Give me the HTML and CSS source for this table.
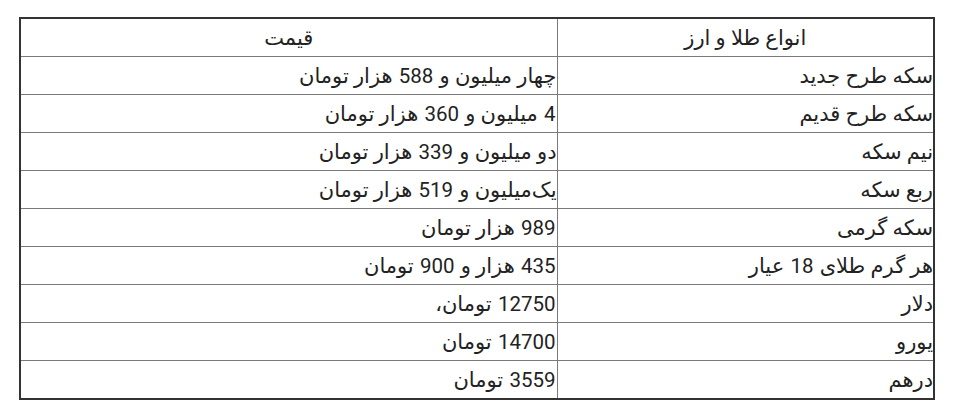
FILE: index.html
```html
<!DOCTYPE html>
<html lang="fa">
<head>
<meta charset="utf-8">
<link rel="stylesheet" href="styles.css">
</head>
<body>
<table class="prices" dir="rtl">
  <colgroup><col class="col-name"><col class="col-price"></colgroup>
  <thead>
    <tr><th>انواع طلا و ارز</th><th>قیمت</th></tr>
  </thead>
  <tbody>
    <tr><td>سکه طرح جدید</td><td>چهار میلیون و <span class="num">588</span> هزار تومان</td></tr>
    <tr><td>سکه طرح قدیم</td><td><span class="num">4</span> میلیون و <span class="num">360</span> هزار تومان</td></tr>
    <tr><td>نیم سکه</td><td>دو میلیون و <span class="num">339</span> هزار تومان</td></tr>
    <tr><td>ربع سکه</td><td>یک‌میلیون و <span class="num">519</span> هزار تومان</td></tr>
    <tr><td>سکه گرمی</td><td><span class="num">989</span> هزار تومان</td></tr>
    <tr><td>هر گرم طلای <span class="num">18</span> عیار</td><td><span class="num">435</span> هزار و <span class="num">900</span> تومان</td></tr>
    <tr><td>دلار</td><td><span class="num">12750</span> تومان،</td></tr>
    <tr><td>یورو</td><td><span class="num">14700</span> تومان</td></tr>
    <tr><td>درهم</td><td><span class="num">3559</span> تومان</td></tr>
  </tbody>
</table>
</body>
</html>
```
FILE: styles.css
```css
html, body {
  margin: 0;
  background: #fff;
}
body {
  padding: 17px 0 0 19px;
  font-family: Roboto, "DejaVu Sans", sans-serif;
  color: #222;
}
.prices {
  width: 916px;
  table-layout: fixed;
  border-collapse: collapse;
  border: 2px solid #333;
  font-size: 21px;
}
.prices th, .prices td {
  height: 36px;
  padding: 1px 0 0 0;
  border: 1px solid #7a7a7a;
  text-align: right;
  font-weight: normal;
  vertical-align: middle;
  line-height: 1;
  white-space: nowrap;
}
.prices th {
  text-align: center;
}
.col-name { width: 377px; }
.num {
  font-size: 20.5px;
  padding: 0 1px;
}
```
